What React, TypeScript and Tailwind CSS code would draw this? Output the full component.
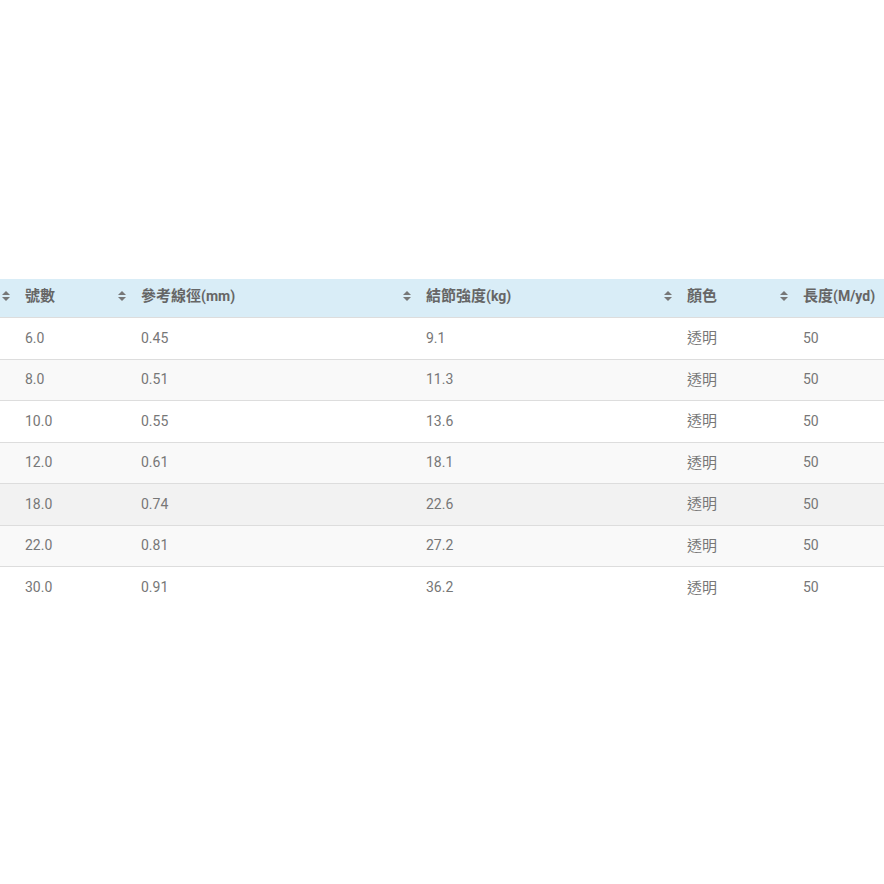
import React from "react";

const cols = [
  { zh: "號數", en: "", w: "w-[116px]" },
  { zh: "參考線徑", en: "(mm)", w: "w-[285px]" },
  { zh: "結節強度", en: "(kg)", w: "w-[261px]" },
  { zh: "顏色", en: "", w: "w-[116px]" },
  { zh: "長度", en: "(M/yd)", w: "w-[120px]" },
];

const rows = [
  ["6.0", "0.45", "9.1", "透明", "50"],
  ["8.0", "0.51", "11.3", "透明", "50"],
  ["10.0", "0.55", "13.6", "透明", "50"],
  ["12.0", "0.61", "18.1", "透明", "50"],
  ["18.0", "0.74", "22.6", "透明", "50"],
  ["22.0", "0.81", "27.2", "透明", "50"],
  ["30.0", "0.91", "36.2", "透明", "50"],
];

const rowBg = ["bg-white", "bg-[#f9f9f9]", "bg-white", "bg-[#f9f9f9]", "bg-[#f2f2f2]", "bg-[#f9f9f9]", "bg-white"];

function SortIcon() {
  return (
    <svg width="8" height="10" viewBox="0 0 8 10" className="shrink-0">
      <polygon points="0,4 4,0 8,4" fill="#777" />
      <polygon points="0,6 4,10 8,6" fill="#777" />
    </svg>
  );
}

export default function App() {
  return (
    <div
      className="w-[884px] h-[884px] bg-white overflow-hidden"
      style={{ fontFamily: 'Roboto, "Noto Sans CJK TC", sans-serif' }}
    >
      <div className="h-[279px]" />
      <div className="w-[884px] overflow-hidden">
        <div className="flex h-[39px] pb-[4px] bg-[#d9edf7] border-b border-[#dddddd] w-max">
          {cols.map((c) => (
            <div key={c.zh} className={`${c.w} shrink-0 flex items-center pl-[2px] gap-[15px] text-[14px] font-bold text-[#666666]`}>
              <SortIcon />
              <span className="whitespace-nowrap">
                <span className="text-[15px]">{c.zh}</span>
                {c.en}
              </span>
            </div>
          ))}
        </div>
        {rows.map((r, i) => (
          <div
            key={i}
            className={`flex h-[41.5px] w-max ${rowBg[i]} ${i < rows.length - 1 ? "border-b border-[#dddddd]" : ""}`}
          >
            {r.map((v, j) => (
              <div
                key={j}
                className={`${cols[j].w} shrink-0 flex items-center pl-[25px] ${j === 3 ? "text-[15px]" : "text-[14px]"} text-[#777777]`}
              >
                {v}
              </div>
            ))}
          </div>
        ))}
      </div>
    </div>
  );
}
